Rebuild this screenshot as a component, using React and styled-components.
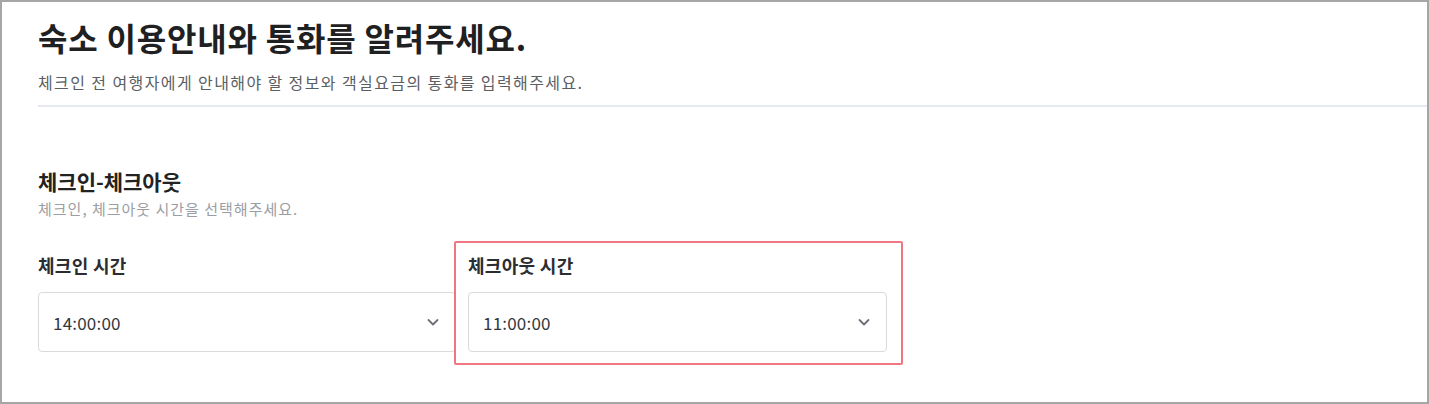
import React from 'react';
import styled, { createGlobalStyle } from 'styled-components';

const GlobalStyle = createGlobalStyle`
	html, body {
		margin: 0;
		padding: 0;
		background: #ffffff;
	}
	body {
		font-family: "Noto Sans CJK KR", "Noto Sans", sans-serif;
		color: #222;
	}
	* {
		box-sizing: border-box;
	}
`;

const Frame = styled.div`
	width: 1429px;
	height: 404px;
	border: 2px solid #a6a6a6;
	padding: 13px 0 0 36px;
	background: #fff;
	overflow: hidden;
`;

const Header = styled.header`
	display: flex;
	flex-direction: column;
	padding-bottom: 12px;
	border-bottom: 2px solid #e6e9ed;
`;

const Title = styled.h1`
	margin: 0;
	font-size: 32px;
	line-height: 44px;
	font-weight: 700;
	color: #1e2022;
	letter-spacing: 0.8px;
`;

const Subtitle = styled.p`
	margin: 12px 0 0;
	font-size: 16px;
	line-height: 22px;
	color: #5a5e63;
	letter-spacing: 1.4px;
`;

const Section = styled.section`
	display: flex;
	flex-direction: column;
	padding-top: 60px;
`;

const SectionTitle = styled.h2`
	margin: 0;
	font-size: 21px;
	line-height: 28px;
	font-weight: 700;
	color: #222;
`;

const SectionDesc = styled.p`
	margin: 4px 0 0;
	font-size: 15px;
	line-height: 20px;
	color: #9a9ea4;
	letter-spacing: 1px;
`;

const FieldRow = styled.div`
	display: grid;
	grid-template-columns: 418px 419px;
	column-gap: 12px;
	margin-top: 34px;
`;

const Field = styled.div`
	position: relative;
	display: flex;
	flex-direction: column;
	gap: 15px;

	${({ $highlight }) => $highlight && `
		&::after {
			content: "";
			position: absolute;
			top: -12px;
			left: -14px;
			right: -16px;
			bottom: -13px;
			border: 2px solid #f07682;
			border-radius: 2px;
			pointer-events: none;
		}
	`}
`;

const Label = styled.label`
	font-size: 18px;
	line-height: 24px;
	font-weight: 600;
	color: #2b2d30;
	letter-spacing: 0.3px;
`;

const SelectBox = styled.div`
	display: flex;
	align-items: center;
	justify-content: space-between;
	height: 60px;
	padding: 0 15px 0 14px;
	border: 1px solid #d9dadc;
	border-radius: 4px;
	background: #fff;
	font-size: 17px;
	color: #34373b;
	letter-spacing: 0.2px;
`;

const Chevron = () => (
	<svg width="14" height="14" viewBox="0 0 14 14" fill="none">
		<path d="M2.5 5 L7 9.5 L11.5 5" stroke="#6b7077" strokeWidth="1.8" strokeLinecap="round" strokeLinejoin="round" />
	</svg>
);

const TimeSelect = ({ label, value, highlight }) => (
	<Field $highlight={highlight}>
		<Label>{label}</Label>
		<SelectBox>
			<span>{value}</span>
			<Chevron />
		</SelectBox>
	</Field>
);

const App = () => {
	return (
		<>
			<GlobalStyle />
			<Frame>
				<Header>
					<Title>숙소 이용안내와 통화를 알려주세요.</Title>
					<Subtitle>체크인 전 여행자에게 안내해야 할 정보와 객실요금의 통화를 입력해주세요.</Subtitle>
				</Header>
				<Section>
					<SectionTitle>체크인-체크아웃</SectionTitle>
					<SectionDesc>체크인, 체크아웃 시간을 선택해주세요.</SectionDesc>
					<FieldRow>
						<TimeSelect label="체크인 시간" value="14:00:00" />
						<TimeSelect label="체크아웃 시간" value="11:00:00" highlight />
					</FieldRow>
				</Section>
			</Frame>
		</>
	);
};

export default App;
